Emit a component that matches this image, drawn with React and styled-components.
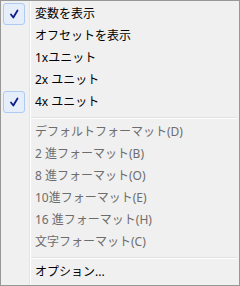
import React from 'react'
import styled, { createGlobalStyle } from 'styled-components'

const Global = createGlobalStyle`
  html, body {
    margin: 0;
    padding: 0;
    background: #ffffff;
  }
`

const Menu = styled.div`
  width: 240px;
  height: 286px;
  box-sizing: border-box;
  border: 1px solid #979797;
  padding: 2px;
  display: flex;
  flex-direction: column;
  background:
    linear-gradient(to right, transparent 28px, #e2e3e3 28px, #e2e3e3 29px, #ffffff 29px, #ffffff 30px, transparent 30px) no-repeat,
    #f0f0f0;
  font-family: "Noto Sans", "Noto Sans CJK JP", sans-serif;
  font-size: 12px;
`

const Item = styled.div`
  height: 22px;
  display: grid;
  grid-template-columns: 22px 1fr;
  column-gap: 10px;
  align-items: center;
  color: ${p => (p.disabled ? '#6d6d6d' : '#000000')};
  line-height: 22px;
  white-space: nowrap;
`

const CheckBox = styled.div`
  width: 22px;
  height: 22px;
  box-sizing: border-box;
  border: 1px solid #abcbf2;
  border-radius: 3px;
  background: #e6eefa;
  display: flex;
  align-items: center;
  justify-content: center;
`

const Separator = styled.div`
  height: 8px;
  margin-left: 28px;
  display: flex;
  flex-direction: column;
  padding-top: 4px;
  box-sizing: border-box;

  &::before {
    content: '';
    height: 1px;
    background: #e0e0e0;
  }
  &::after {
    content: '';
    height: 1px;
    background: #ffffff;
  }
`

const Check = () => (
  <svg width="20" height="20" viewBox="0 0 20 20">
    <path d="M7 10.5 L9.3 13.5 L13.5 6.5" fill="none" stroke="#101c8c" strokeWidth="1.8" strokeLinecap="round" strokeLinejoin="round" />
  </svg>
)

const MenuItem = ({ checked, disabled, children }) => (
  <Item disabled={disabled}>
    {checked ? (
      <CheckBox>
        <Check />
      </CheckBox>
    ) : (
      <span />
    )}
    <span>{children}</span>
  </Item>
)

export default function App () {
  return (
    <>
      <Global />
      <Menu>
        <MenuItem checked>変数を表示</MenuItem>
        <MenuItem>オフセットを表示</MenuItem>
        <MenuItem>1xユニット</MenuItem>
        <MenuItem>2x ユニット</MenuItem>
        <MenuItem checked>4x ユニット</MenuItem>
        <Separator />
        <MenuItem disabled>デフォルトフォーマット(D)</MenuItem>
        <MenuItem disabled>2 進フォーマット(B)</MenuItem>
        <MenuItem disabled>8 進フォーマット(O)</MenuItem>
        <MenuItem disabled>10進フォーマット(E)</MenuItem>
        <MenuItem disabled>16 進フォーマット(H)</MenuItem>
        <MenuItem disabled>文字フォーマット(C)</MenuItem>
        <Separator />
        <MenuItem>オプション...</MenuItem>
      </Menu>
    </>
  )
}
